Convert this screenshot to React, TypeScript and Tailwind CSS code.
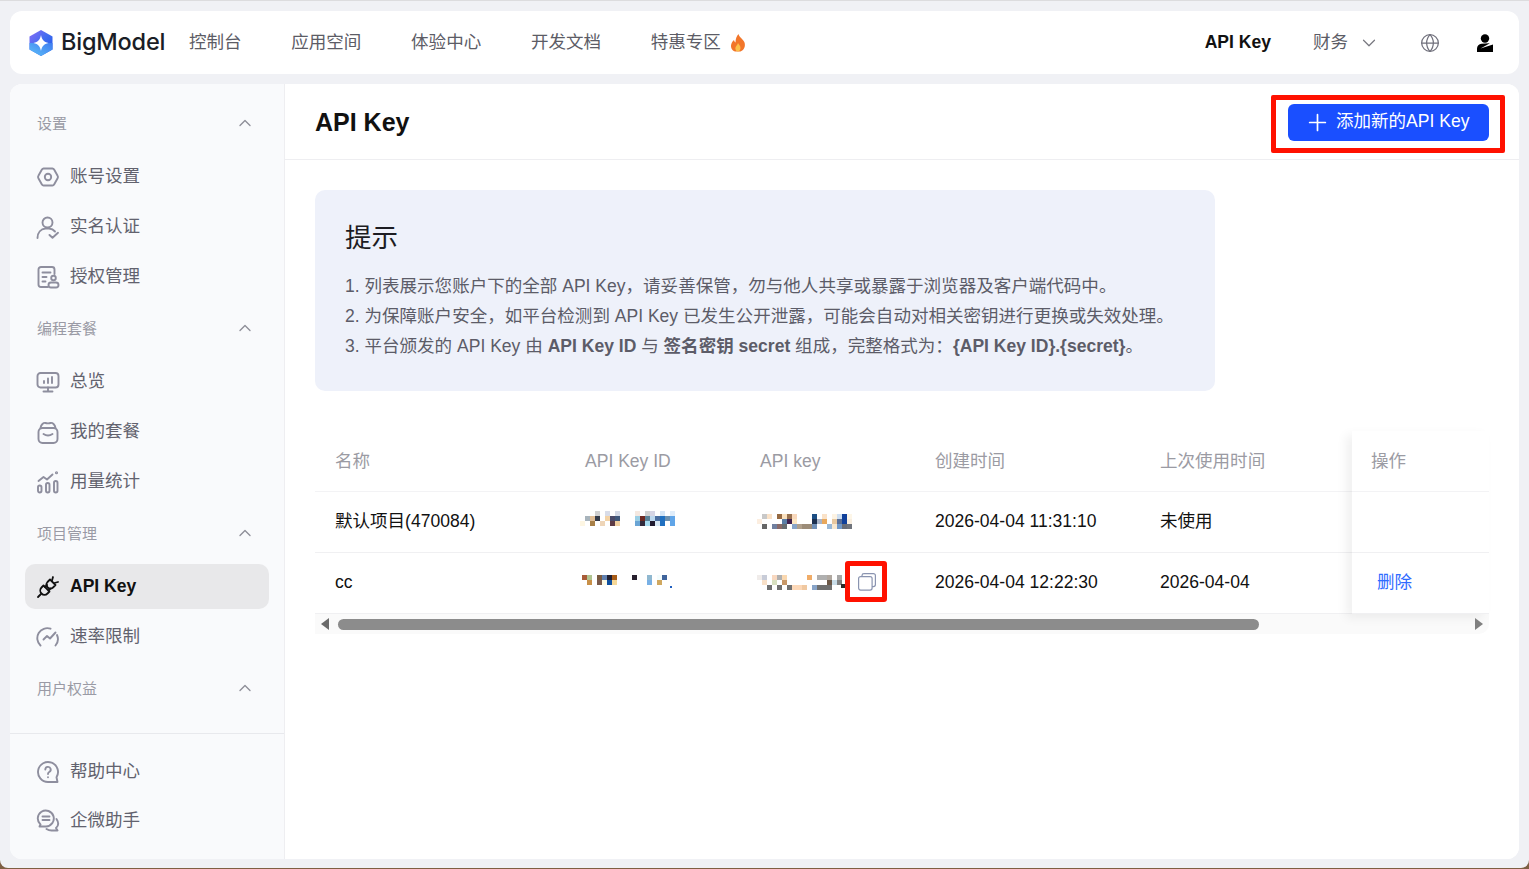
import { ChevronDown, ChevronUp, Globe, Plus } from "lucide-react";
import type { ReactNode } from "react";

type Cell = [number, number, string];

// mosaic blocks covering the masked keys, 5px each
const idRow1: Cell[] = [
  [3, 0, "#cfcfcf"], [5, 0, "#d8dce8"], [7, 0, "#d5dae6"], [11, 0, "#f5e8e0"], [13, 0, "#d0d0d0"], [14, 0, "#d5d5e5"], [16, 0, "#d5e5f5"], [18, 0, "#e0edfa"],
  [1, 1, "#a8b4bc"], [2, 1, "#e0bd95"], [3, 1, "#343a48"], [5, 1, "#f3d2a5"], [6, 1, "#4a4a68"], [7, 1, "#40587c"], [11, 1, "#9ccfe5"], [12, 1, "#6e2a22"], [13, 1, "#5a8298"], [14, 1, "#bdd8ee"], [15, 1, "#4a6ea0"], [16, 1, "#2070c0"], [17, 1, "#6a90b0"], [18, 1, "#60a5e8"],
  [0, 2, "#fdf6e3"], [2, 2, "#a88048"], [4, 2, "#eed5b8"], [6, 2, "#5c3a44"], [7, 2, "#f0cfa0"], [11, 2, "#6aa5d5"], [12, 2, "#322a3c"], [13, 2, "#a8dcf0"], [14, 2, "#201a30"], [15, 2, "#d8e8f5"], [16, 2, "#2070c0"], [18, 2, "#60a5e8"],
];

const keyRow1: Cell[] = [
  [1, 0, "#c8c8c8"], [2, 0, "#fae2c8"], [4, 0, "#966a42"], [5, 0, "#fae0bd"], [6, 0, "#96704e"], [7, 0, "#f8d8bc"], [11, 0, "#1c4e84"], [13, 0, "#fae2c8"], [15, 0, "#fdf3e3"], [16, 0, "#cfdff0"], [17, 0, "#10409a"], [18, 0, "#fdf6e8"],
  [0, 1, "#fceee0"], [5, 1, "#5a7ea5"], [6, 1, "#40204e"], [7, 1, "#fde6c0"], [11, 1, "#1c3050"], [12, 1, "#a8b4c8"], [13, 1, "#e8a85c"], [15, 1, "#e8c8a0"], [16, 1, "#5a7098"], [17, 1, "#10409a"], [18, 1, "#f8eee0"],
  [1, 2, "#666666"], [3, 2, "#7080a0"], [4, 2, "#8a6a68"], [5, 2, "#666c70"], [7, 2, "#88a4c8"], [8, 2, "#b0a08c"], [9, 2, "#9c8c78"], [10, 2, "#9c8c78"], [11, 2, "#7090b8"], [14, 2, "#98b8d8"], [15, 2, "#f8e8d0"], [16, 2, "#7098c8"], [17, 2, "#666c78"], [18, 2, "#70747c"],
];

const idRow2: Cell[] = [
  [0, 0, "#a85c38"], [1, 0, "#b0c490"], [3, 0, "#7a5a40"], [4, 0, "#6080b0"], [5, 0, "#201e30"], [6, 0, "#a85c18"], [10, 0, "#28202e"], [13, 0, "#90b8d0"], [15, 0, "#f4fcfc"], [16, 0, "#40649c"],
  [1, 1, "#c89048"], [3, 1, "#7a5a4c"], [4, 1, "#fdfae5"], [5, 1, "#1050a0"], [6, 1, "#f5d898"], [13, 1, "#78b0e5"], [15, 1, "#d0a860"],
];

const keyRow2: Cell[] = [
  [0, 0, "#f0ecea"], [1, 0, "#c8ccd8"], [3, 0, "#f8d8c0"], [4, 0, "#b0b0b0"], [5, 0, "#fad8b0"], [10, 0, "#f0ac68"], [12, 0, "#b0b0b0"], [13, 0, "#b0b0b0"], [14, 0, "#b0a8a0"], [16, 0, "#a8a8a8"],
  [1, 1, "#f8e0c8"], [3, 1, "#d8e0c0"], [5, 1, "#c89868"], [14, 1, "#6c5848"], [15, 1, "#c8dce8"], [16, 1, "#808080"],
  [2, 2, "#707070"], [4, 2, "#707070"], [6, 2, "#707070"], [7, 2, "#fcd8b8"], [8, 2, "#fcd8b8"], [9, 2, "#f0c8a0"], [11, 2, "#88a4c8"], [12, 2, "#707070"], [13, 2, "#707070"], [14, 2, "#707070"],
];

function Pixels({ cells, cols, rows, children }: { cells: Cell[]; cols: number; rows: number; children?: ReactNode }) {
  return (
    <svg width={cols * 5} height={rows * 5} shapeRendering="crispEdges" className="block shrink-0">
      {cells.map(([x, y, c]) => (
        <rect key={`${x}-${y}`} x={x * 5} y={y * 5} width={5} height={5} fill={c} />
      ))}
      {children}
    </svg>
  );
}

function Ico({ children }: { children: ReactNode }) {
  return (
    <svg width="24" height="24" viewBox="0 0 24 24" fill="none" stroke="currentColor" strokeWidth={1.9} strokeLinecap="round" strokeLinejoin="round" className="shrink-0 text-[#8e8e9e]">
      {children}
    </svg>
  );
}

const icons = {
  account: (
    <Ico>
      <path d="M7.6 3.5h8.8a2 2 0 0 1 1.7 1l3.5 6.2a2.4 2.4 0 0 1 0 2.5l-3.5 6.3a2 2 0 0 1-1.7 1H7.6a2 2 0 0 1-1.7-1l-3.5-6.3a2.4 2.4 0 0 1 0-2.5l3.5-6.2a2 2 0 0 1 1.7-1z" />
      <circle cx="12" cy="12" r="3.2" />
    </Ico>
  ),
  verify: (
    <Ico>
      <circle cx="11.5" cy="7.5" r="5" />
      <path d="M1.5 23c0-5.500 3.500-9 8-9.500h3.500c2.500.3 4.500 1.300 6 3" />
      <path d="M13.500 20l3 2.800 5.500-5" />
    </Ico>
  ),
  auth: (
    <Ico>
      <path d="M12 22H5a2.500 2.500 0 0 1-2.500-2.500V4.500A2.500 2.500 0 0 1 5 2h11a2.500 2.500 0 0 1 2.500 2.500V9" />
      <path d="M6.500 7.500h8M6.500 12h4M6.500 16.500h3" />
      <circle cx="17.500" cy="13" r="2.300" />
      <rect x="12.500" y="17.500" width="10" height="5" rx="2.500" />
    </Ico>
  ),
  overview: (
    <Ico>
      <rect x="1.500" y="3" width="21" height="14.500" rx="3" />
      <path d="M7.500 21.500h9M12 17.500v4M8 13v-2M12 13V8.500M16 13V7" />
    </Ico>
  ),
  plan: (
    <Ico>
      <rect x="2.500" y="8" width="19" height="15" rx="4" />
      <path d="M4.500 8C5 4.500 7.500 2.500 9.500 3c1.500.5 3.500.5 5 0 2-.5 4.500 1.500 5 5M7.500 14c3 2 6 2 9 0" />
    </Ico>
  ),
  usage: (
    <Ico>
      <rect x="2" y="15.500" width="3.500" height="7" rx="1.700" />
      <rect x="10" y="13" width="3.500" height="9.500" rx="1.700" />
      <rect x="18" y="11" width="3.500" height="11.500" rx="1.700" />
      <path d="M2.500 11l5-4 3.500 2.500 5.500-5" />
      <circle cx="20.500" cy="2.800" r="0.600" />
    </Ico>
  ),
  rate: (
    <Ico>
      <path d="M4.500 20.500a10 10 0 0 1 10-16.800" />
      <path d="M21 10a10 10 0 0 1-1.500 10.500" />
      <path d="M7.500 14.500l3.500-3.500 3 2.500 5.500-6" />
    </Ico>
  ),
  help: (
    <Ico>
      <path d="M12 22A10 10 0 1 1 20.500 17.300L21.500 22z" />
      <path d="M9.300 9.500A2.700 2.700 0 1 1 13.200 12c-.8.500-1.200 1-1.200 2" />
      <path d="M12 17.200v.1" />
    </Ico>
  ),
  chat: (
    <Ico>
      <path d="M10 17.500H3.500l1-2A8 8 0 1 1 10 17.500z" />
      <path d="M6.500 7.500h7M6.500 11h7" />
      <path d="M20.500 10c2.300 3.500 1.800 7-.5 9l1.500 2.500h-6c-2 0-3.500-.5-5-1.500" />
    </Ico>
  ),
};

const plug = (
  <svg width="24" height="24" viewBox="0 0 24 24" fill="none" stroke="#111" strokeWidth="1.800" strokeLinecap="round" strokeLinejoin="round" className="shrink-0">
    <path d="M14 4.500l5.500 5.500-2.500 2.500a3.900 3.900 0 0 1-5.500-5.500z" />
    <path d="M17 2l-1 3.500M22 7l-3.500 1" />
    <path d="M7.500 10.500l6 6-2 2a4 4 0 0 1-6-6z" />
    <path d="M5 19l-3 3M11 10l-2 2M14.500 13.500l-2 2" />
  </svg>
);

function NavItem({ icon, label, active }: { icon: ReactNode; label: string; active?: boolean }) {
  return (
    <div
      className={
        active
          ? "flex h-[45px] items-center gap-[10px] rounded-[10px] bg-[#e8e8ea] pl-[11px] font-bold text-[#111111]"
          : "flex h-[45px] items-center gap-[10px] pl-[11px] text-[#62626e]"
      }
    >
      {icon}
      <span>{label}</span>
    </div>
  );
}

function Section({ title, first, children }: { title: string; first?: boolean; children?: ReactNode }) {
  return (
    <div className={first ? "mt-[20px]" : "mt-[10px]"}>
      <div className="flex h-[40px] items-center justify-between pl-[12px] pr-[14px] text-[15px] text-[#9a9aa5]">
        <span>{title}</span>
        <ChevronUp size={20} strokeWidth={1.600} className="-mt-[3px] text-[#8e8e98]" />
      </div>
      {children && <div className="mt-[10px] flex flex-col gap-[5px]">{children}</div>}
    </div>
  );
}

function Sidebar() {
  return (
    <aside className="flex w-[275px] shrink-0 flex-col rounded-l-[12px] border-r border-[#eeeef1] bg-[#f9fafc]">
      <div className="px-[15px]">
        <Section title="设置" first>
          <NavItem icon={icons.account} label="账号设置" />
          <NavItem icon={icons.verify} label="实名认证" />
          <NavItem icon={icons.auth} label="授权管理" />
        </Section>
        <Section title="编程套餐">
          <NavItem icon={icons.overview} label="总览" />
          <NavItem icon={icons.plan} label="我的套餐" />
          <NavItem icon={icons.usage} label="用量统计" />
        </Section>
        <Section title="项目管理">
          <NavItem icon={plug} label="API Key" active />
          <NavItem icon={icons.rate} label="速率限制" />
        </Section>
        <Section title="用户权益" />
      </div>
      <div className="mt-auto flex flex-col gap-[4px] border-t border-[#e8e9ed] px-[15px] pb-[16px] pt-[15px]">
        <NavItem icon={icons.help} label="帮助中心" />
        <NavItem icon={icons.chat} label="企微助手" />
      </div>
    </aside>
  );
}

function Header() {
  return (
    <header className="flex h-[63px] shrink-0 items-center rounded-[12px] bg-white pl-[19px] pr-[26px]">
      <svg width="24" height="26" viewBox="0 0 24 26" className="shrink-0">
        <defs>
          <linearGradient id="logoA" x1="0" y1="0" x2="1" y2="1">
            <stop offset="0" stopColor="#8a6cf6" />
            <stop offset="0.500" stopColor="#3f6cf0" />
            <stop offset="1" stopColor="#1f55e8" />
          </linearGradient>
          <linearGradient id="logoB" x1="0" y1="1" x2="1" y2="0">
            <stop offset="0" stopColor="#5cc0f8" />
            <stop offset="1" stopColor="#3f7cf0" />
          </linearGradient>
        </defs>
        <path d="M12 0l11.500 6.500v13L12 26 .5 19.500v-13z" fill="url(#logoA)" />
        <path d="M.5 13v6.500L12 26l11.500-6.500V13z" fill="url(#logoB)" />
        <path d="M12 5c.8 4.500 2.800 7 7.500 8-4.700 1-6.700 3.500-7.500 8-.8-4.500-2.800-7-7.500-8 4.700-1 6.700-3.500 7.500-8z" fill="#fff" />
      </svg>
      <span className="-mt-[2px] ml-[8px] mr-[24px] w-[104px] whitespace-nowrap font-['Inter',sans-serif] text-[23.500px] font-medium tracking-[-0.2px] text-[#1a1d26]">BigModel</span>
      <nav className="flex items-center gap-[49.700px] text-[#5c5c66]">
        <span>控制台</span>
        <span>应用空间</span>
        <span>体验中心</span>
        <span>开发文档</span>
        <span className="flex items-center gap-[9px]">
          特惠专区
          <svg width="16" height="18" viewBox="0 0 16 18">
            <path d="M8.500 0c.5 3 4 4.500 5.800 8 1.500 3.500.2 8-3.800 9.500H5C1.500 16.500.2 12.500 1.500 9.500c.5-1.500 1.500-2.500 2.500-3.500.2 1.300.7 2 1.500 2.500C5.500 5 6.500 2 8.500 0z" fill="#f2762a" />
            <path d="M8 9c.5 1.500 2.800 2.800 2.500 5.200-.2 1.800-1.300 3.300-2.500 3.300s-2.700-1.300-2.700-3.300C5.300 12.500 7.500 11 8 9z" fill="#fbc04a" />
          </svg>
        </span>
      </nav>
      <div className="ml-auto flex items-center">
        <span className="font-bold text-[#111111]">API Key</span>
        <span className="ml-[42px] text-[#5c5c66]">财务</span>
        <ChevronDown size={22} strokeWidth={1.300} className="ml-[10px] text-[#77777f]" />
        <Globe size={20} strokeWidth={1.500} className="ml-[40px] text-[#70707c]" />
        <svg width="16" height="18" viewBox="0 0 16 18" className="ml-[37px]">
          <circle cx="8" cy="4.500" r="4.200" fill="#000" />
          <path d="M0 18v-3.500C0 12 2 10 4.500 9.800l8-.5v.3L3.500 14.500l12.500-4V18z" fill="#000" />
        </svg>
      </div>
    </header>
  );
}

function Hint() {
  return (
    <section className="h-[201px] w-[900px] rounded-[10px] bg-[#eef1fa] px-[30px] pt-[28px] leading-[30px] text-[#5c5c68]">
      <h2 className="mb-[13px] text-[26.500px] font-normal leading-[40px] text-[#1c1c22]">提示</h2>
      <p>1. 列表展示您账户下的全部 API Key，请妥善保管，勿与他人共享或暴露于浏览器及客户端代码中。</p>
      <p>2. 为保障账户安全，如平台检测到 API Key 已发生公开泄露，可能会自动对相关密钥进行更换或失效处理。</p>
      <p>
        3. 平台颁发的 API Key 由 <b>API Key ID</b> 与 <b>签名密钥 secret</b> 组成，完整格式为：<b>{"{API Key ID}.{secret}"}</b>。
      </p>
    </section>
  );
}

function KeysTable() {
  const head = "flex h-[61px] items-center border-b border-[#f3f3f5] text-[#9b9ba3]";
  const row = "flex h-[61px] items-center border-b border-[#f0f0f2] pb-[2px] text-[#111111]";
  return (
    <div className="mt-[40px] w-[1174px]">
      <div className="flex">
        <div className="w-[1037px] shrink-0">
          <div className={head}>
            <div className="w-[270px] pl-[20px]">名称</div>
            <div className="w-[175px]">API Key ID</div>
            <div className="w-[175px]">API key</div>
            <div className="w-[225px]">创建时间</div>
            <div>上次使用时间</div>
          </div>
          <div className={row}>
            <div className="w-[270px] pl-[20px]">默认项目(470084)</div>
            <div className="w-[175px]">
              <div className="-ml-[5px] mb-[6px]"><Pixels cells={idRow1} cols={19} rows={3} /></div>
            </div>
            <div className="w-[175px]">
              <div className="-ml-[3px]"><Pixels cells={keyRow1} cols={19} rows={3} /></div>
            </div>
            <div className="w-[225px]">2026-04-04 11:31:10</div>
            <div>未使用</div>
          </div>
          <div className={row}>
            <div className="w-[270px] pl-[20px]">cc</div>
            <div className="w-[175px]">
              <div className="-ml-[3px]">
                <Pixels cells={idRow2} cols={18} rows={3}>
                  <rect x={88} y={11} width={2} height={2} fill="#2060c0" />
                </Pixels>
              </div>
            </div>
            <div className="flex w-[175px] items-center">
              <div className="-ml-[3px] flex">
                <Pixels cells={keyRow2} cols={18} rows={3}>
                  <rect x={84} y={9} width={4} height={4} fill="#2a2a2a" />
                </Pixels>
              </div>
              <div className="relative ml-[11px]">
                <svg width="18" height="18" viewBox="0 0 18 18" fill="none" stroke="#8a94b0" strokeWidth="1.200" className="block">
                  <rect x="0.600" y="3.600" width="13.500" height="13.500" rx="2" />
                  <path d="M4 3.500V2.500A2 2 0 0 1 6 .6h9.400a2 2 0 0 1 2 2v9a2 2 0 0 1-2 2H14" />
                </svg>
                <div className="absolute -bottom-[11px] -left-[13px] -right-[11px] -top-[12px] rounded-[3px] border-[5px] border-[#ff1100]" />
              </div>
            </div>
            <div className="w-[225px]">2026-04-04 12:22:30</div>
            <div>2026-04-04</div>
          </div>
        </div>
        <div className="w-[137px] shrink-0 bg-white shadow-[-6px_4px_10px_rgba(0,0,0,0.06)]">
          <div className={head + " pl-[19px]"}>操作</div>
          <div className="h-[61px] border-b border-[#f0f0f2]" />
          <div className="flex h-[61px] items-center border-b border-[#f0f0f2] pb-[2px] pl-[25px] text-[#2f6bff]">删除</div>
        </div>
      </div>
      <div className="flex h-[20px] items-center rounded-br-[10px] bg-[#fafafa] pl-[5px] pr-[5px]">
        <svg width="10" height="12" viewBox="0 0 10 12"><path d="M9 0v12L1 6z" fill="#6b6b6b" /></svg>
        <div className="ml-[8px] h-[11px] w-[921px] rounded-full bg-[#8c8c8c]" />
        <svg width="10" height="12" viewBox="0 0 10 12" className="ml-auto"><path d="M1 0v12l8-6z" fill="#808080" /></svg>
      </div>
    </div>
  );
}

export default function App() {
  return (
    <div className="h-screen bg-[#7e5f43] font-['Liberation_Sans','Noto_Sans_CJK_SC',sans-serif] text-[17.550px]">
      <div className="flex h-[868px] flex-col gap-[10px] rounded-b-[8px] border-t border-[#dcdcde] bg-[#f0f1f5] px-[10px] pb-[9px] pt-[10px]">
        <Header />
        <div className="flex min-h-0 flex-1 rounded-[12px] bg-white">
          <Sidebar />
          <main className="min-w-0 flex-1 rounded-r-[12px] bg-white">
            <div className="flex h-[76px] items-center justify-between border-b border-[#eeeef1] pl-[30px] pr-[30px]">
              <h1 className="mt-[2px] text-[25px] font-bold text-[#111111]">API Key</h1>
              <div className="relative mt-[1px]">
                <button className="flex h-[37px] w-[201px] items-center gap-[5px] rounded-[6px] bg-[#1a4fff] pb-[2px] pl-[16px] text-white">
                  <Plus size={27} strokeWidth={1.500} className="mt-[2px]" />
                  <span>添加新的API Key</span>
                </button>
                <div className="absolute -bottom-[12px] -left-[17px] -right-[16px] -top-[9px] rounded-[2px] border-[5px] border-[#ff1100]" />
              </div>
            </div>
            <div className="px-[30px] pt-[30px]">
              <Hint />
              <KeysTable />
            </div>
          </main>
        </div>
      </div>
    </div>
  );
}
